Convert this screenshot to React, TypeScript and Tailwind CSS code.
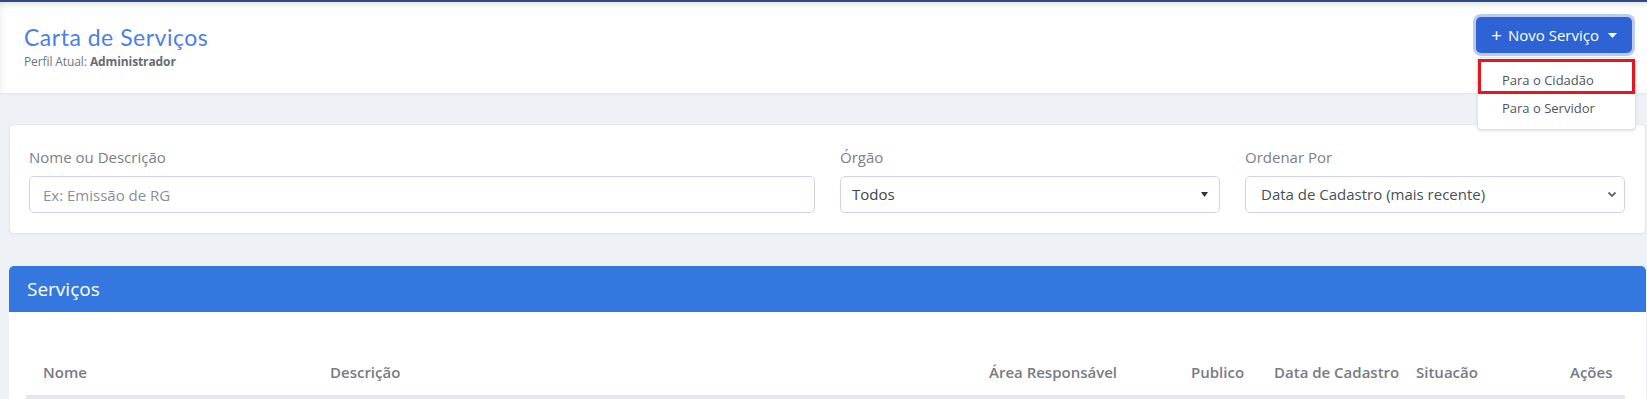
import { useState } from 'react';

type Column = {
    label: string;
};

const columns: Column[] = [
    { label: 'Nome' },
    { label: 'Descrição' },
    { label: 'Área Responsável' },
    { label: 'Publico' },
    { label: 'Data de Cadastro' },
    { label: 'Situacão' },
    { label: 'Ações' },
];

const Caret = () => (
    <svg width="9" height="5" viewBox="0 0 9 5" className="ml-[9px]">
        <path d="M0 0h9L4.5 5z" fill="currentColor" />
    </svg>
);

const App = () => {
    const [open] = useState(true);

    return (
        <div className="min-h-screen bg-[#eef2f7] font-['Open_Sans',sans-serif]">
            {/* Header */}
            <header className="flex h-[93px] justify-between border-t-2 border-[#2b4b8b] bg-white pl-6 pr-[15px] shadow-[inset_0_7px_6px_-5px_rgba(0,0,0,0.13),inset_8px_0_8px_-8px_rgba(0,0,0,0.08),0_1px_2px_rgba(0,0,0,0.05)]">
                <div className="pt-[19px]">
                    <h1 className="font-['Lato',sans-serif] text-[23px] leading-[32px] tracking-[0.5px] text-[#4d80e6]">
                        Carta de Serviços
                    </h1>
                    <p className="mt-[1px] text-[12px] leading-[16px] tracking-[-0.1px] text-[#6c757d]">
                        Perfil Atual: <span className="font-bold text-[#666c73]">Administrador</span>
                    </p>
                </div>

                <div className="relative pt-[15px]">
                    <button className="flex h-[36px] w-[156px] items-center justify-center rounded-[5px] bg-[#2e63d6] text-[15px] text-white ring-[3px] ring-[#bcc9f1]">
                        <span className="mr-[6px] text-[19px] leading-none">+</span>
                        Novo Serviço
                        <Caret />
                    </button>

                    {open && (
                        <div className="absolute left-[1px] top-[55px] z-10 w-[159px] rounded-[4px] border border-[#e1e4ea] bg-white pb-[6px] pt-[9px] shadow-sm">
                            <div className="flex h-[28px] items-center px-6 text-[13px] text-[#50555c]">Para o Cidadão</div>
                            <div className="flex h-[28px] items-center px-6 text-[13px] text-[#50555c]">Para o Servidor</div>
                            {/* highlight annotation */}
                            <div className="absolute left-0 top-[1px] h-[35px] w-[157px] border-[3px] border-[#e8141f]" />
                        </div>
                    )}
                </div>
            </header>

            <main className="pl-[9px] pr-[1px] pt-[31px]">
                {/* Filters */}
                <div className="rounded-[5px] border border-[#e4e7ee] bg-white pb-[20px] pl-[19px] pr-[20px] pt-[22px] shadow-[0_1px_2px_rgba(0,0,0,0.04)]">
                    <div className="grid grid-cols-[1fr_380px_380px] gap-[25px]">
                        <div>
                            <label className="mb-[8px] block text-[15px] leading-[21px] text-[#7b8089]">Nome ou Descrição</label>
                            <input
                                placeholder="Ex: Emissão de RG"
                                className="h-[37px] w-full rounded-[5px] border border-[#d4d3e6] px-[13px] text-[15px] text-[#495057] outline-none placeholder:text-[#8a8f99]"
                            />
                        </div>
                        <div>
                            <label className="mb-[8px] block text-[15px] leading-[21px] text-[#7b8089]">Órgão</label>
                            <div className="flex h-[37px] items-center justify-between rounded-[5px] border border-[#d4d3e6] pl-[11px] pr-[11px] text-[15px] text-[#3f444b]">
                                <span>Todos</span>
                                <svg width="7" height="5" viewBox="0 0 7 5">
                                    <path d="M0 0h7L3.5 5z" fill="#333" />
                                </svg>
                            </div>
                        </div>
                        <div>
                            <label className="mb-[8px] block text-[15px] leading-[21px] text-[#7b8089]">Ordenar Por</label>
                            <div className="flex h-[37px] items-center justify-between rounded-[5px] border border-[#d4d3e6] pl-[15px] pr-[7px] text-[15px] text-[#495057]">
                                <span>Data de Cadastro (mais recente)</span>
                                <svg width="10" height="7" viewBox="0 0 10 7">
                                    <path d="M1.5 1.5 5 5l3.5-3.5" fill="none" stroke="#666" strokeWidth="1.8" />
                                </svg>
                            </div>
                        </div>
                    </div>
                </div>

                {/* Services table */}
                <div className="mt-[32px] overflow-hidden rounded-t-[5px] bg-white">
                    <div className="flex h-[46px] items-center bg-[#3478df] pl-[18px] text-[19px] text-white">Serviços</div>
                    <div className="pb-6 pl-[17px] pr-[21px] pt-[39px]">
                        <div className="grid grid-cols-[287px_659px_202px_83px_142px_154px_73px] border-b-4 border-[#e3e6ef]">
                            {columns.map((col) => (
                                <div key={col.label} className="whitespace-nowrap px-[17px] pb-[12px] pt-[11px] text-[15px] font-semibold leading-[21px] text-[#777c84]">
                                    {col.label}
                                </div>
                            ))}
                        </div>
                        <div className="h-[40px] bg-[#f5f6fa]" />
                    </div>
                </div>
            </main>
        </div>
    );
};

export default App;
